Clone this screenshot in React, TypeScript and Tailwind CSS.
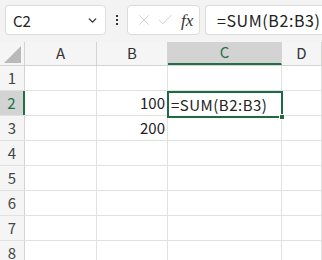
import { ChevronDown, X, Check } from "lucide-react";

const cols = [
  { key: "A", w: "w-[72px]" },
  { key: "B", w: "w-[71px]" },
  { key: "C", w: "w-[114px]" },
  { key: "D", w: "flex-1" },
];

const cells: Record<string, string> = {
  B2: "100",
  B3: "200",
};

export default function App() {
  const rows = [1, 2, 3, 4, 5, 6, 7, 8];

  return (
    <div
      className="h-[260px] w-[322px] overflow-hidden bg-white text-[#222]"
      style={{ fontFamily: '"Noto Sans CJK JP", "Noto Sans", sans-serif' }}
    >
      {/* formula bar */}
      <div className="flex h-[42px] items-start bg-[#f3f3f3] pt-[5px] pl-[5px]">
        <div className="flex h-[30px] w-[101px] items-center justify-between rounded-[4px] border border-[#dcdcdc] bg-white pr-[6px] pl-[7px]">
          <span className="text-[15px] leading-none">C2</span>
          <ChevronDown className="h-[13px] w-[13px] text-[#333]" strokeWidth={2.5} />
        </div>
        <div className="flex h-[30px] w-[21px] flex-col items-center justify-center gap-[2px]">
          <span className="h-[2px] w-[2px] bg-[#333]" />
          <span className="h-[2px] w-[2px] bg-[#333]" />
          <span className="h-[2px] w-[2px] bg-[#333]" />
        </div>
        <div className="flex h-[30px] w-[73px] items-center rounded-[4px] border border-[#dcdcdc] bg-white pl-[7px]">
          <X className="h-[18px] w-[18px] text-[#c8c8c8]" strokeWidth={1.1} />
          <Check className="ml-[3px] h-[18px] w-[18px] text-[#c8c8c8]" strokeWidth={1.1} />
          <span
            className="ml-[7px] text-[17px] italic leading-none text-[#333]"
            style={{ fontFamily: '"Liberation Serif", serif' }}
          >
            fx
          </span>
        </div>
        <div className="ml-[5px] flex h-[30px] flex-1 items-center rounded-l-[4px] border border-r-0 border-[#dcdcdc] bg-white pl-[11px]">
          <span className="text-[16px] leading-none tracking-[0.6px]">=SUM(B2:B3)</span>
        </div>
      </div>

      {/* grid */}
      <div className="relative">
        <div className="flex h-[24px] border-b border-[#d4d4d4] bg-[#f5f5f5]">
          <div className="relative w-[25px] border-r border-[#d4d4d4]">
            <svg className="absolute right-[3px] bottom-[2px]" width="17" height="17" viewBox="0 0 17 17">
              <polygon points="17,0 17,17 0,17" fill="#b9b9b9" />
            </svg>
          </div>
          {cols.map((c) => (
            <div
              key={c.key}
              className={`${c.w} flex items-center justify-center border-r border-[#d4d4d4] text-[15px] ${
                c.key === "C"
                  ? "border-b-2 border-b-[#1e7145] bg-[#d3d3d3] text-[#1e7145]"
                  : "text-[#333]"
              }`}
            >
              {c.key}
            </div>
          ))}
        </div>

        {rows.map((r) => (
          <div key={r} className="flex h-[25px] border-b border-[#e1e1e1]">
            <div
              className={`flex w-[25px] items-center justify-center border-r text-[15px] ${
                r === 2
                  ? "border-r-2 border-[#1e7145] bg-[#d3d3d3] text-[#1e7145]"
                  : "border-[#d4d4d4] bg-[#f5f5f5] text-[#444]"
              }`}
            >
              {r}
            </div>
            {cols.map((c) => (
              <div
                key={c.key}
                className={`${c.w} flex items-center justify-end border-r border-[#e1e1e1] pr-[2px] text-[15px]`}
              >
                {cells[`${c.key}${r}`] ?? ""}
              </div>
            ))}
          </div>
        ))}

        {/* active cell */}
        <div className="absolute top-[49px] left-[167px] flex h-[27px] w-[116px] items-center border-2 border-[#1e6b41] bg-white pl-[2px]">
          <span className="text-[15px] leading-none tracking-[0.5px]">=SUM(B2:B3)</span>
          <div className="absolute right-[-4px] bottom-[-4px] h-[6px] w-[6px] border border-white bg-[#1e6b41]" />
        </div>
      </div>
    </div>
  );
}
